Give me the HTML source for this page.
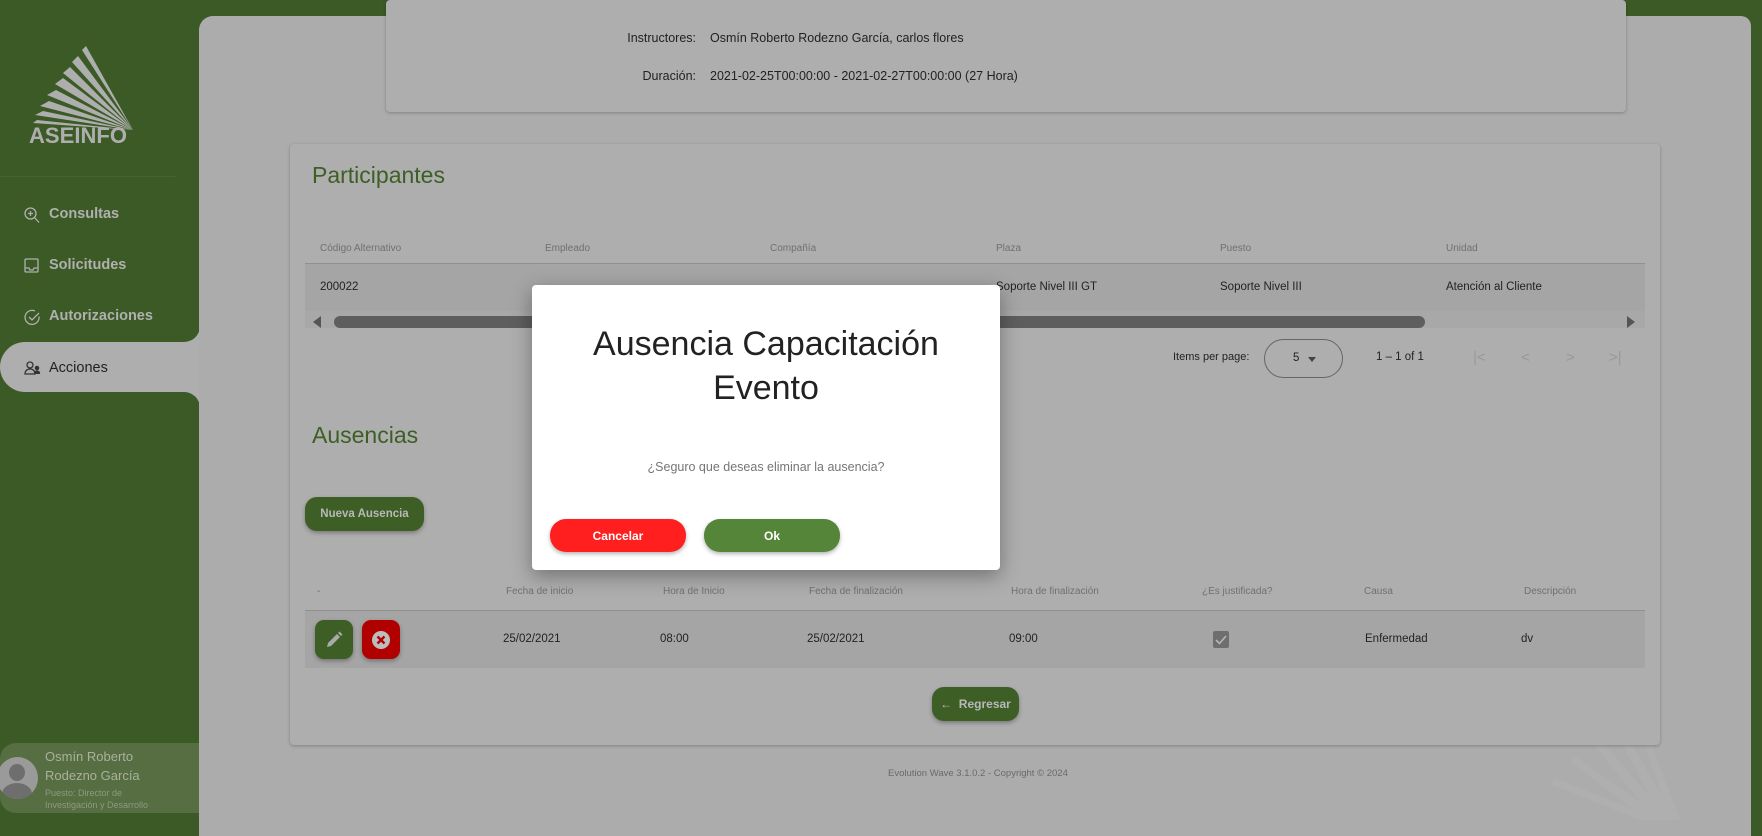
<!DOCTYPE html>
<html><head><meta charset="utf-8">
<style>
*{margin:0;padding:0;box-sizing:border-box}
body{width:1762px;height:820px;overflow:hidden;background:#3b5a25;font-family:"Liberation Sans",sans-serif;position:relative}
.a{position:absolute;white-space:nowrap}
.main{position:absolute;left:199px;top:16px;width:1552px;height:820px;background:#acacac;border-top-left-radius:14px;border-top-right-radius:10px}
.card{position:absolute;background:#aeaeae;border-radius:4px;box-shadow:0 1px 3px rgba(0,0,0,.25)}
.hd{font-size:10px;color:#707070}
.td{font-size:11.5px;color:#222}
.g{color:#3d5e25}
.btn{position:absolute;border-radius:12px;color:#b8b8b8;font-weight:bold;font-size:12px;display:flex;align-items:center;justify-content:center;box-shadow:0 2px 4px rgba(0,0,0,.3)}
.menu{font-size:14.5px;color:#b0b0b0;font-weight:bold}
</style></head><body>
<!-- sidebar logo -->
<svg class="a" style="left:28px;top:46px" width="108" height="100" viewBox="0 0 108 100">
<g fill="#aeaeae">
<polygon points="58,0 54,4 105,84"/>
<polygon points="50,10 44,16 105,84"/>
<polygon points="42,21 35,27 105,84"/>
<polygon points="35,32 27,38 105,84"/>
<polygon points="28,44 19,49 105,84"/>
<polygon points="21,55 12,60 105,84"/>
<polygon points="15,65 7,69 105,84"/>
<polygon points="9,74 5,77 105,84"/>
</g>
<text x="1" y="97" font-family="Liberation Sans" font-weight="bold" font-size="22" fill="#aeaeae" textLength="98" lengthAdjust="spacingAndGlyphs">ASEINFO</text>
</svg>
<div class="a" style="left:0;top:176px;width:175px;height:1px;background:#46632f"></div>
<!-- menu -->
<svg class="a" style="left:24px;top:207px" width="16" height="17" viewBox="0 0 16 17" fill="none" stroke="#b0b0b0" stroke-width="1.3"><circle cx="6.5" cy="6.5" r="5.5"/><path d="M10.5 10.5L15 15.5M6.5 4v5M4 6.5h5"/></svg>
<div class="a menu" style="left:49px;top:206px">Consultas</div>
<svg class="a" style="left:24px;top:258px" width="16" height="16" viewBox="0 0 16 16" fill="none" stroke="#b0b0b0" stroke-width="1.3"><rect x="1" y="1" width="13" height="13" rx="1"/><path d="M1 10h4l1 2h3l1-2h4"/></svg>
<div class="a menu" style="left:49px;top:257px">Solicitudes</div>
<svg class="a" style="left:24px;top:309px" width="17" height="17" viewBox="0 0 17 17" fill="none" stroke="#b0b0b0" stroke-width="1.3"><path d="M15 7.5A7 7 0 1 1 11 2"/><path d="M5 8l3 3 7-7"/></svg>
<div class="a menu" style="left:49px;top:308px">Autorizaciones</div>
<div class="a" style="left:0;top:342px;width:205px;height:50px;background:#aeaeae;border-radius:25px 0 0 25px"></div>
<div class="a" style="left:180px;top:326px;width:20px;height:16px;background:#aeaeae"></div>
<div class="a" style="left:180px;top:318px;width:20px;height:24px;background:#3b5a25;border-bottom-right-radius:16px"></div>
<div class="a" style="left:180px;top:392px;width:20px;height:18px;background:#aeaeae"></div>
<div class="a" style="left:180px;top:392px;width:20px;height:24px;background:#3b5a25;border-top-right-radius:16px"></div>
<svg class="a" style="left:24px;top:361px" width="18" height="15" viewBox="0 0 18 15" fill="none" stroke="#333" stroke-width="1.3"><circle cx="6" cy="4" r="3"/><path d="M1 13c0-3 2-5 5-5s5 2 5 5z"/><circle cx="13" cy="7" r="1.6" fill="#333"/><path d="M10.5 13c0-2 1-3 2.5-3s2.5 1 2.5 3" fill="#333"/></svg>
<div class="a menu" style="left:49px;top:360px;color:#222;font-weight:normal">Acciones</div>
<!-- user -->
<div class="a" style="left:0;top:743px;width:199px;height:70px;background:#566e42;border-radius:16px 0 0 16px"></div>
<div class="a" style="left:-3px;top:757px;width:41px;height:42px;border-radius:50%;background:#9a9a9a;overflow:hidden">
<div class="a" style="left:12px;top:7px;width:16px;height:17px;border-radius:50%;background:#6e6e6e"></div>
<div class="a" style="left:5px;top:26px;width:30px;height:22px;border-radius:50%;background:#6e6e6e"></div></div>
<div class="a" style="left:45px;top:747px;font-size:13px;color:#a8b29e;line-height:19px">Osmín Roberto<br>Rodezno García</div>
<div class="a" style="left:45px;top:787px;font-size:9px;color:#8b9b7e;line-height:12px">Puesto: Director de<br>Investigación y Desarrollo</div>
<!-- main -->
<div class="main"></div>
<!-- watermark -->
<svg class="a" style="left:1510px;top:700px" width="170" height="120" viewBox="0 0 170 120">
<g fill="#afafaf">
<polygon points="120,0 126,2 170,120 160,120"/>
<polygon points="100,20 106,16 165,120 152,120"/>
<polygon points="80,40 86,35 160,120 145,120"/>
<polygon points="60,62 65,56 155,120 138,120"/>
<polygon points="40,84 45,78 150,120 130,120"/>
</g></svg>
<div class="card" style="left:386px;top:0;width:1240px;height:112px"></div>
<div class="a" style="left:550px;top:31px;width:146px;text-align:right;font-size:12.5px;color:#222">Instructores:</div>
<div class="a" style="left:710px;top:31px;font-size:12.5px;color:#222">Osmín Roberto Rodezno García, carlos flores</div>
<div class="a" style="left:550px;top:69px;width:146px;text-align:right;font-size:12.5px;color:#222">Duración:</div>
<div class="a" style="left:710px;top:69px;font-size:12.5px;color:#222">2021-02-25T00:00:00 - 2021-02-27T00:00:00 (27 Hora)</div>

<div class="card" style="left:290px;top:144px;width:1370px;height:601px"></div>
<div class="a g" style="left:312px;top:162px;font-size:23px">Participantes</div>
<div class="a hd" style="left:320px;top:243px">Código Alternativo</div>
<div class="a hd" style="left:545px;top:243px">Empleado</div>
<div class="a hd" style="left:770px;top:243px">Compañía</div>
<div class="a hd" style="left:996px;top:243px">Plaza</div>
<div class="a hd" style="left:1220px;top:243px">Puesto</div>
<div class="a hd" style="left:1446px;top:243px">Unidad</div>
<div class="a" style="left:305px;top:263px;width:1340px;height:1px;background:#909090"></div>
<div class="a" style="left:305px;top:264px;width:1340px;height:47px;background:#a5a5a5"></div>
<div class="a td" style="left:320px;top:281px">200022</div>
<div class="a td" style="left:996px;top:281px">Soporte Nivel III GT</div>
<div class="a td" style="left:1220px;top:281px">Soporte Nivel III</div>
<div class="a td" style="left:1446px;top:281px">Atención al Cliente</div>
<div class="a" style="left:305px;top:311px;width:1340px;height:17px;background:#a8a8a8"></div>
<div class="a" style="left:313px;top:316px;width:0;height:0;border-top:6px solid transparent;border-bottom:6px solid transparent;border-right:8px solid #555"></div>
<div class="a" style="left:334px;top:316px;width:1091px;height:12px;border-radius:6px;background:#5e5e5e"></div>
<div class="a" style="left:1627px;top:316px;width:0;height:0;border-top:6px solid transparent;border-bottom:6px solid transparent;border-left:8px solid #555"></div>
<div class="a td" style="left:1173px;top:351px;font-size:11px">Items per page:</div>
<div class="a" style="left:1264px;top:339px;width:79px;height:39px;border:1px solid #666;border-radius:20px"></div>
<div class="a td" style="left:1293px;top:352px">5</div>
<div class="a" style="left:1308px;top:357px;width:0;height:0;border-left:4.5px solid transparent;border-right:4.5px solid transparent;border-top:5px solid #444"></div>
<div class="a td" style="left:1376px;top:351px">1 – 1 of 1</div>
<div class="a" style="left:1473px;top:349px;font-size:15px;color:#989898">|&lt;</div>
<div class="a" style="left:1521px;top:349px;font-size:15px;color:#989898">&lt;</div>
<div class="a" style="left:1566px;top:349px;font-size:15px;color:#989898">&gt;</div>
<div class="a" style="left:1609px;top:349px;font-size:15px;color:#989898">&gt;|</div>

<div class="a g" style="left:312px;top:422px;font-size:23px">Ausencias</div>
<div class="btn" style="left:305px;top:497px;width:119px;height:34px;background:#3d5e25;font-size:11.5px">Nueva Ausencia</div>

<div class="a hd" style="left:317px;top:586px">-</div>
<div class="a hd" style="left:506px;top:586px">Fecha de inicio</div>
<div class="a hd" style="left:663px;top:586px">Hora de Inicio</div>
<div class="a hd" style="left:809px;top:586px">Fecha de finalización</div>
<div class="a hd" style="left:1011px;top:586px">Hora de finalización</div>
<div class="a hd" style="left:1202px;top:586px">¿Es justificada?</div>
<div class="a hd" style="left:1364px;top:586px">Causa</div>
<div class="a hd" style="left:1524px;top:586px">Descripción</div>
<div class="a" style="left:305px;top:610px;width:1340px;height:1px;background:#909090"></div>
<div class="a" style="left:305px;top:611px;width:1340px;height:57px;background:#a5a5a5"></div>
<div class="btn" style="left:315px;top:620px;width:38px;height:39px;background:#3d5e25;border-radius:9px">
<svg width="18" height="18" viewBox="0 0 18 18"><path d="M2 16l1-4 9-9 3 3-9 9z M13 2l1.5-1.5 3 3L16 5z" fill="#aaa"/></svg></div>
<div class="btn" style="left:362px;top:620px;width:38px;height:39px;background:#b00000;border-radius:9px">
<svg width="20" height="20" viewBox="0 0 20 20"><circle cx="10" cy="10" r="9" fill="#bdbdbd"/><path d="M6.5 6.5l7 7M13.5 6.5l-7 7" stroke="#b00000" stroke-width="2.4"/></svg></div>
<div class="a td" style="left:503px;top:633px">25/02/2021</div>
<div class="a td" style="left:660px;top:633px">08:00</div>
<div class="a td" style="left:807px;top:633px">25/02/2021</div>
<div class="a td" style="left:1009px;top:633px">09:00</div>
<div class="a" style="left:1213px;top:631px;width:16px;height:17px;background:#6e6e6e;border-radius:2px"></div>
<svg class="a" style="left:1213px;top:631px" width="16" height="17"><path d="M3 9l3.5 3.5L13 5" stroke="#b5b5b5" stroke-width="1.6" fill="none"/></svg>
<div class="a td" style="left:1365px;top:633px">Enfermedad</div>
<div class="a td" style="left:1521px;top:633px">dv</div>

<div class="btn" style="left:932px;top:687px;width:87px;height:34px;background:#3d5e25;font-size:12px">← &nbsp;Regresar</div>
<div class="a" style="left:888px;top:768px;font-size:9.5px;color:#6a6a6a">Evolution Wave 3.1.0.2 - Copyright © 2024</div>

<!-- modal -->
<div class="a" style="left:532px;top:285px;width:468px;height:285px;background:#fff;border-radius:4px;box-shadow:0 6px 20px rgba(0,0,0,.35)"></div>
<div class="a" style="left:532px;top:322px;width:468px;text-align:center;font-size:34px;line-height:44px;color:#222;white-space:normal;padding:0 50px">Ausencia Capacitación Evento</div>
<div class="a" style="left:532px;top:460px;width:468px;text-align:center;font-size:12.5px;color:#757575">¿Seguro que deseas eliminar la ausencia?</div>
<div class="btn" style="left:550px;top:519px;width:136px;height:33px;background:#ff1f1f;color:#fff;border-radius:16px">Cancelar</div>
<div class="btn" style="left:704px;top:519px;width:136px;height:33px;background:#558539;color:#fff;border-radius:16px">Ok</div>
</body></html>
